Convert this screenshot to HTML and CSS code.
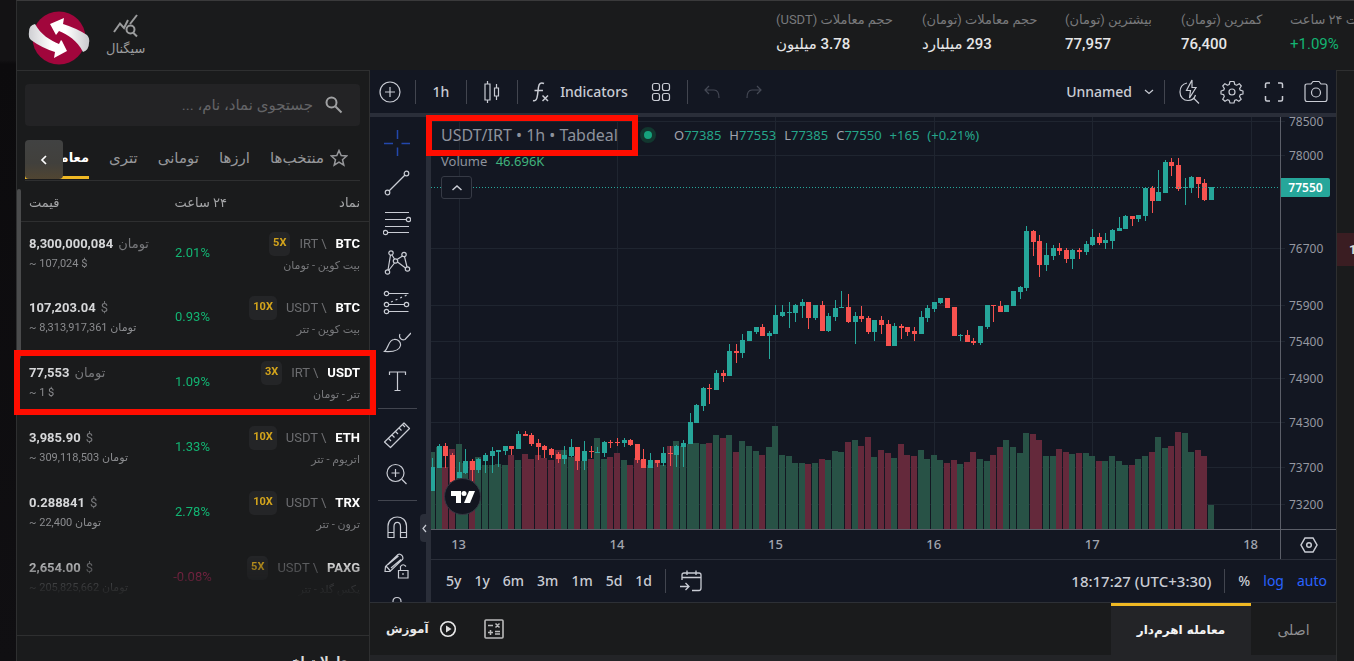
FILE: index.html
```html
<!DOCTYPE html>
<html lang="fa">
<head>
<meta charset="utf-8">
<title>Tabdeal</title>
<meta name="viewport" content="width=device-width, initial-scale=1">
<link rel="stylesheet" href="styles.css">
</head>
<body>
<div class="page">
  <div class="backdrop" aria-hidden="true"></div>
  <div class="app">
    <header class="header">
      <a class="logo" href="#" aria-label="Tabdeal">
        <svg width="62" height="54" viewBox="0 0 62 54">
          <defs><linearGradient id="ribbon" x1="0" x2="1"><stop offset="0" stop-color="#cfcfd3"/><stop offset=".6" stop-color="#fff"/></linearGradient>
          <linearGradient id="ribbon2" x1="1" x2="0"><stop offset="0" stop-color="#c9c9cd"/><stop offset=".6" stop-color="#fff"/></linearGradient></defs>
          <circle cx="31" cy="27" r="26.5" fill="#a1063c"/>
          <path d="M7 13Q1 14 1 21Q0 26 3 29Q14 37 27 41L26 47L39 40L34 30L33 29L31 33C22 29 13 24 7 13Z" fill="url(#ribbon)"/>
          <path d="M55 41Q61 39 61 32Q62 27 59 24Q48 17 35 13L36 7L22 13L28 24L31 20C40 24 49 29 55 41Z" fill="url(#ribbon2)"/>
        </svg>
      </a>
      <a class="signal" href="#">
        <svg width="26" height="24" viewBox="0 0 26 24" fill="none" stroke="currentColor" stroke-width="2"><path d="M1 18L7 9.500L11 14L15 6"/><path d="M17 10L24 1"/><circle cx="17.500" cy="15.500" r="4"/><path d="M20 18.500L24 22.500"/></svg>
        <span>سیگنال</span>
      </a>
      <dl class="stats">
        <div><dt>حجم معاملات (USDT)</dt><dd>3.78 میلیون</dd></div>
        <div><dt>حجم معاملات (تومان)</dt><dd>293 میلیارد</dd></div>
        <div><dt>بیشترین (تومان)</dt><dd>77,957</dd></div>
        <div><dt>کمترین (تومان)</dt><dd>76,400</dd></div>
        <div class="day"><dt>تغییرات ۲۴ ساعت</dt><dd class="up" dir="ltr">+1.09%</dd></div>
      </dl>
    </header>
    <div class="content">
      <aside class="sidebar">
        <label class="search">
          <svg width="18" height="18" viewBox="0 0 18 18" fill="none" stroke="currentColor" stroke-width="2"><circle cx="6.500" cy="6.500" r="5"/><path d="M10.500 10.500L16.500 16.500"/></svg>
          <input type="text" aria-label="جستجو" placeholder="جستجوی نماد، نام، ...">
        </label>
        <div class="market-tabs">
          <button class="mtab"><svg width="18" height="18" viewBox="0 0 18 18" fill="none" stroke="currentColor" stroke-width="1.500"><path d="M9 1.500L11.200 6.600L16.700 7L12.500 10.700L13.800 16.200L9 13.200L4.200 16.200L5.500 10.700L1.300 7L6.800 6.600Z"/></svg>منتخب‌ها</button>
          <button class="mtab">ارزها</button>
          <button class="mtab">تومانی</button>
          <button class="mtab">تتری</button>
          <button class="mtab active">معامله اهرم‌دار</button>
          <button class="scroll-tabs" aria-label="بیشتر"><svg width="8" height="10" viewBox="0 0 8 10" fill="none" stroke="#fff" stroke-width="1.700"><path d="M6 1L2 5L6 9"/></svg></button>
        </div>
        <div class="market-list">
          <table class="markets">
            <thead><tr><th class="price">قیمت</th><th class="change" dir="rtl">۲۴ ساعت</th><th class="symbol">نماد</th></tr></thead>
            <tbody>
              <tr><td class="price"><p><b>8,300,000,084</b> <i>تومان</i></p><small>~ 107,024 $</small></td><td class="change">2.01%</td><td class="symbol"><p><span class="lev">5X</span><i>IRT \</i><b>BTC</b></p><small dir="rtl">بیت کوین - تومان</small></td></tr>
              <tr><td class="price"><p><b>107,203.04</b> <i>$</i></p><small>~ 8,313,917,361 <i>تومان</i></small></td><td class="change">0.93%</td><td class="symbol"><p><span class="lev">10X</span><i>USDT \</i><b>BTC</b></p><small dir="rtl">بیت کوین - تتر</small></td></tr>
              <tr><td class="price"><p><b>77,553</b> <i>تومان</i></p><small>~ 1 $</small></td><td class="change">1.09%</td><td class="symbol"><p><span class="lev">3X</span><i>IRT \</i><b>USDT</b></p><small dir="rtl">تتر - تومان</small></td></tr>
              <tr><td class="price"><p><b>3,985.90</b> <i>$</i></p><small>~ 309,118,503 <i>تومان</i></small></td><td class="change">1.33%</td><td class="symbol"><p><span class="lev">10X</span><i>USDT \</i><b>ETH</b></p><small dir="rtl">اتریوم - تتر</small></td></tr>
              <tr><td class="price"><p><b>0.288841</b> <i>$</i></p><small>~ 22,400 <i>تومان</i></small></td><td class="change">2.78%</td><td class="symbol"><p><span class="lev">10X</span><i>USDT \</i><b>TRX</b></p><small dir="rtl">ترون - تتر</small></td></tr>
              <tr><td class="price"><p><b>2,654.00</b> <i>$</i></p><small>~ 205,825,662 <i>تومان</i></small></td><td class="change down">-0.08%</td><td class="symbol"><p><span class="lev">5X</span><i>USDT \</i><b>PAXG</b></p><small dir="rtl">پکس گلد - تتر</small></td></tr>
            </tbody>
          </table>
        </div>
        <h2 class="recent">معاملات اخیر</h2>
        <div class="scroll-thumb"></div>
        <div class="mark mark-row"></div>
      </aside>
      <main class="workspace">
        <div class="toolbar">
          <button class="t-add" aria-label="Compare"><svg width="24" height="24" viewBox="0 0 24 24"><circle cx="12" cy="12" r="10"/><path d="M12 7V17M7 12H17"/></svg></button>
          <span class="vsep"></span>
          <button class="t-int">1h</button>
          <span class="vsep"></span>
          <button class="t-type" aria-label="Candles"><svg width="20" height="24" viewBox="0 0 20 24"><path d="M5.500 1V4M5.500 20V23M3 4H8V20H3ZM14.500 4V8M14.500 16V20M12.500 8H16.500V16H12.500Z"/></svg></button>
          <span class="vsep"></span>
          <button class="t-ind"><svg width="20" height="24" viewBox="0 0 20 24"><path stroke-width="1.500" d="M2 20.500C5 21.500 6 19 6.500 15L7.500 7C8 3.500 10 2 13 3.500M3.500 10.500H12M11.500 15.500L17 21M17 15.500L11.500 21"/></svg>Indicators</button>
          <button class="t-grid" aria-label="Templates"><svg width="20" height="20" viewBox="0 0 20 20"><rect x="1.500" y="1.500" width="7" height="7" rx="2"/><rect x="11.500" y="1.500" width="7" height="7" rx="2"/><rect x="1.500" y="11.500" width="7" height="7" rx="2"/><rect x="11.500" y="11.500" width="7" height="7" rx="2"/></svg></button>
          <span class="vsep"></span>
          <button class="t-hist" aria-label="Undo"><svg width="18" height="16" viewBox="0 0 18 16"><path d="M6 2L2 6L6 10M2 6H11C14.500 6 16 8 16 14"/></svg></button>
          <button class="t-hist" aria-label="Redo"><svg width="18" height="16" viewBox="0 0 18 16"><path d="M12 2L16 6L12 10M16 6H7C3.500 6 2 8 2 14"/></svg></button>
          <button class="t-save">Unnamed <svg width="10" height="6" viewBox="0 0 10 6"><path d="M1 1L5 4.500L9 1"/></svg></button>
          <span class="vsep wide"></span>
          <button class="t-icon" aria-label="Quick search"><svg width="24" height="28" viewBox="0 0 24 28"><path d="M9 5C4 6 2 10 2 14C2 19 5.500 22.500 10 22.500C13.500 22.500 16.500 20.500 17.500 17M16 20.500L21 25.500M14 2L8.500 12.500H12.500L11.500 20L18 9.500H14Z"/></svg></button>
          <button class="t-icon" aria-label="Settings"><svg width="26" height="26" viewBox="0 0 26 26"><circle cx="13" cy="13" r="3"/><path stroke-linejoin="round" d="M11 2.500H15L15.800 5.500L17.600 6.200L20.300 4.700L22.300 7L20.600 9.600L21.200 11.200L24 12V15L21.200 15.700L20.500 17.500L22.200 20.200L19.800 22.300L17.300 20.700L15.700 21.400L15 24H11L10.200 21.400L8.500 20.700L6 22.300L3.700 20.200L5.300 17.500L4.700 15.700L2 15V12L4.700 11.200L5.400 9.600L3.700 7L5.900 4.700L8.500 6.200L10.200 5.500Z"/></svg></button>
          <button class="t-icon" aria-label="Fullscreen"><svg width="20" height="24" viewBox="0 0 20 24"><path stroke-width="1.500" d="M1.500 8V4.500Q1.500 3 3 3H6M14 3H17Q18.500 3 18.500 4.500V8M18.500 16V19.500Q18.500 21 17 21H14M6 21H3Q1.500 21 1.500 19.500V16"/></svg></button>
          <button class="t-icon" aria-label="Snapshot"><svg width="26" height="26" viewBox="0 0 26 26"><path d="M8 5L10 2.500H16L18 5H22Q24 5 24 7V20Q24 22.500 22 22.500H4Q2 22.500 2 20V7Q2 5 4 5Z"/><circle cx="13" cy="13.500" r="4.500"/></svg></button>
        </div>
        <div class="chart-area">
          <div class="tools">
            <button class="cross" aria-label="Cross"><svg width="28" height="28" viewBox="0 0 28 28"><path stroke-width="1.500" d="M1 14.500H10M18.500 14.500H27M14.500 1V10M14.500 18.500V27"/></svg></button>
            <button aria-label="Trend line"><svg width="28" height="28" viewBox="0 0 28 28"><circle cx="23.500" cy="4.500" r="2.300"/><circle cx="4.500" cy="23.500" r="2.300"/><path d="M6 22L22 6"/></svg></button>
            <button aria-label="Fib"><svg width="28" height="28" viewBox="0 0 28 28"><path d="M2 3.500H26M2 10.500H23M2 17.500H26M5 23.500H26"/><circle cx="25.500" cy="10.500" r="2.200"/><circle cx="2.500" cy="23.500" r="2.200"/></svg></button>
            <button aria-label="Patterns"><svg width="28" height="28" viewBox="0 0 28 28"><circle cx="8" cy="4" r="2.200"/><circle cx="21" cy="5.500" r="2.200"/><circle cx="12.500" cy="12" r="2.200"/><circle cx="4.500" cy="23" r="2.200"/><circle cx="24.500" cy="20" r="2.200"/><path d="M7.500 6L5 21M9 6L11.500 10M14 10.500L19.500 7M21.500 7.700L24 18M11.500 14L6 21M14.500 13L22.500 19"/></svg></button>
            <button aria-label="Forecast"><svg width="28" height="28" viewBox="0 0 28 28"><circle cx="3.500" cy="4.500" r="2.200"/><circle cx="3.500" cy="15.500" r="2.200"/><circle cx="23.500" cy="15.500" r="2.200"/><circle cx="3.500" cy="22.500" r="2.200"/><path d="M6 4.500H25.500M6 15.500H21M6 22.500H25.500"/><path stroke-dasharray="2 3" d="M8 13L25 5.500"/></svg></button>
            <button aria-label="Brush"><svg width="28" height="28" viewBox="0 0 28 28"><path d="M1.500 22.500C6 19 5 11 11 10.500C15 10 18 13 17.500 16.500C16.500 22 9 23 1.500 22.500ZM17 5C15.500 8 18 12 22 10.500L28 4"/></svg></button>
            <button aria-label="Text"><svg width="28" height="28" viewBox="0 0 28 28"><path d="M6.500 6V3H22.500V6M14.500 3V21.500M11.500 21.500H17.500"/></svg></button>
            <span class="hsep"></span>
            <button aria-label="Measure"><svg width="28" height="28" viewBox="0 0 28 28"><path stroke-linejoin="round" d="M1.500 21L21 2L26.500 7.500L7.500 26.500ZM5.500 17.500L8 20M9 14L11.500 16.500M12.500 10.500L15 13M16 7L18.500 9.500M19.500 3.500L22 6"/></svg></button>
            <button aria-label="Zoom"><svg width="28" height="28" viewBox="0 0 28 28"><circle cx="12.500" cy="12" r="8.500"/><path d="M12.500 8V16M8.500 12H16.500M19 18.500L23.500 23"/></svg></button>
            <span class="hsep"></span>
            <button aria-label="Magnet"><svg width="28" height="28" viewBox="0 0 28 28"><path d="M5 24.500V13C5 1 23.500 1 23.500 13V24.500H17.500V13.500C17.500 8 11 8 11 13.500V24.500ZM5 19.500H11M17.500 19.500H23.500"/></svg></button>
            <button aria-label="Lock drawing"><svg width="28" height="28" viewBox="0 0 28 28"><path d="M2 18.500L2.500 13.500L15 1.500Q17 .500 19 2.500Q20.500 4.500 19.500 6.500L7 18.500ZM3 13L7.500 18M5 11.500L15.500 3M8 15L18 6.500M15.500 17.500H25V25H15.500ZM17.500 17V13.500Q20 10 23 13.500M20 20V22"/></svg></button>
            <button aria-label="Hide"><svg width="28" height="28" viewBox="0 0 28 28"><path d="M10 14V8.500Q10 4.500 14 4.500T18 8.500V14"/></svg></button>
          </div>
          <div class="divider"><button class="handle" aria-label="Collapse tools"><svg width="5" height="9" viewBox="0 0 5 9"><path d="M4 1L1 4.500L4 8"/></svg></button></div>
          <div class="chart">
            <div class="plot-row">
              <div class="plot">
                <svg id="plot"></svg>
                <div class="legend">
                  <div class="l-top"><h1>USDT/IRT • 1h • Tabdeal</h1><span class="dot"></span>
                    <p class="ohlc"><span>O<b>77385</b></span><span>H<b>77553</b></span><span>L<b>77385</b></span><span>C<b>77550</b></span><b>+165</b><b>(+0.21%)</b></p></div>
                  <p class="vol">Volume <b>46.696K</b></p>
                  <button class="fold" aria-label="Collapse"><svg width="12" height="8" viewBox="0 0 12 8"><path stroke-width="1.500" d="M1.500 6L6 2L10.500 6"/></svg></button>
                </div>
                <div class="tv"><svg width="24" height="14" viewBox="0 0 24 14" fill="#fff"><path d="M0 1H10V13H5V6H0Z"/><circle cx="13" cy="3.500" r="2.500"/><path d="M18 1H24L19 13H13Z"/></svg></div>
              </div>
              <div class="axis"><svg id="prices"></svg><span class="last">77550</span></div>
            </div>
            <div class="time-row"><svg id="times"></svg><button class="corner" aria-label="Axis settings"><svg width="18" height="16" viewBox="0 0 18 16"><path stroke-width="1.500" d="M5 1H13L17 8L13 15H5L1 8Z"/><circle cx="9" cy="8" r="2.300" stroke-width="1.500"/></svg></button></div>
            <div class="range-row">
              <button>5y</button><button>1y</button><button>6m</button><button>3m</button><button>1m</button><button>5d</button><button>1d</button>
              <span class="vsep"></span>
              <button class="goto" aria-label="Go to"><svg width="24" height="22" viewBox="0 0 24 22"><path stroke-width="1.300" d="M3 10V5Q3 3 5 3H20Q22 3 22 5V18Q22 20.500 20 20.500H13M3 7.500H22M8 .500V5M17 .500V5M1 16.500H9.500M6.500 13L10 16.500L6.500 20"/></svg></button>
              <button class="clock">18:17:27 (UTC+3:30)</button>
              <span class="vsep"></span>
              <button class="pct">%</button><button class="on">log</button><button class="on">auto</button>
            </div>
          </div>
        </div>
        <nav class="dock">
          <a class="learn" href="#"><span>آموزش</span><svg width="18" height="18" viewBox="0 0 18 18"><circle cx="9" cy="9" r="7.300" stroke-width="1.600"/><path d="M7 5.500L12.500 9L7 12.500Z" fill="#ddd" stroke="none"/></svg></a>
          <button class="calc" aria-label="ماشین حساب"><svg width="20" height="20" viewBox="0 0 20 20"><rect x="1" y="1" width="18" height="18" rx="1" stroke-width="1.600"/><path stroke-width="1.500" d="M4 6.500H9M11.500 4.500L15.500 8.500M15.500 4.500L11.500 8.500M4 13.500H9M6.500 11V16M11 12.500H16M11 15H16"/></svg></button>
          <button class="dtab active">معامله اهرم‌دار</button>
          <button class="dtab">اصلی</button>
        </nav>
        <div class="mark mark-title"></div>
      </main>
      <aside class="rail"><span>1</span></aside>
    </div>
  </div>
</div>
<script src="chart.js"></script>
</body>
</html>
```
FILE: styles.css
```css
* { box-sizing: border-box; }
body { margin: 0; background: #111012; color: #a5a6a8; font: 13px/20px Roboto, "DejaVu Sans", sans-serif; overflow: hidden; }
button { margin: 0; padding: 0; border: 0; background: none; color: inherit; font: inherit; flex: none; display: flex; align-items: center; justify-content: center; }
a { color: inherit; text-decoration: none; }
p, dl, dt, dd, h1, h2 { margin: 0; font-weight: 400; }
i { font-style: normal; }
svg { flex: none; display: block; }
.page { display: grid; grid-template-columns: 16px minmax(0, 1fr); height: 100vh; }
.backdrop { background: linear-gradient(#131214 60px, #0c0b0d 64px, #100f12); }
.app { display: flex; flex-direction: column; min-width: 0; min-height: 0; background: #1a1b1c; }

.header { display: flex; flex: none; height: 70px; border-top: 1px solid #3a3a3b; border-left: 1px solid #2e2f30; overflow: hidden; }
.logo { padding: 10px 0 0 11px; }
.signal { display: flex; flex-direction: column; align-items: center; gap: 1px; margin-left: 16px; padding-top: 13px; color: #9b9c9d; }
.stats { display: grid; grid-template-columns: 120px 117px 90px 83px 64px; gap: 26px; margin-left: auto; padding-top: 9px; white-space: nowrap; }
.stats div { direction: rtl; display: flex; flex-direction: column; align-items: flex-end; }
.stats .day { width: 120px; }
.stats dt { color: #78797b; }
.stats dd { margin-top: 4px; font-size: 15px; font-weight: 500; color: #e6e6e7; }
.stats dd.up { color: #13b472; font-weight: 400; }

.content { display: flex; flex: 1; min-height: 0; }
.sidebar { position: relative; display: flex; flex-direction: column; flex: none; width: 354px; border: 1px solid #2e2f30; border-bottom: 0; z-index: 2; }
.search { display: flex; flex: none; direction: rtl; align-items: center; gap: 12px; height: 42px; margin: 13px 9px 0 8px; padding: 0 17px; border-radius: 4px; background: #232325; color: #a0a1a3; }
.search input { flex: 1; min-width: 0; padding: 0; border: 0; outline: 0; background: none; color: #ccc; font: inherit; font-size: 15px; }
.search input::placeholder { color: #636467; opacity: 1; }
.market-tabs { position: relative; display: flex; flex: none; direction: rtl; gap: 20px; height: 41px; margin: 14px 9px 0 8px; padding: 0 12px; border-bottom: 1px solid #2e2f30; overflow: hidden; }
.mtab { gap: 6px; height: 39px; font-size: 15px; color: #96979a; white-space: nowrap; border-bottom: 3px solid transparent; }
.mtab.active { color: #fff; font-weight: 700; font-size: 13px; border-color: #f0b924; }
.scroll-tabs { position: absolute; left: 0; top: 0; width: 38px; height: 39px; border-radius: 4px; background: linear-gradient(#414242, #41403c 60%, #504532); }
.market-list { flex: none; height: 454px; overflow: hidden; -webkit-mask-image: linear-gradient(#000 375px, transparent 416px); mask-image: linear-gradient(#000 375px, transparent 416px); }
.markets { width: 100%; border-collapse: collapse; table-layout: fixed; }
.markets th { height: 40px; padding: 5px 0 0; border-bottom: 1px solid #2e2f30; font-size: 13px; font-weight: 400; }
.markets td { height: 65px; padding: 11px 0 0; vertical-align: top; }
.markets .price { width: 149px; padding-left: 12px; text-align: left; }
.markets .change { width: 62px; text-align: center; white-space: nowrap; }
.markets th.change { text-align: right; padding-right: 1px; }
.markets .symbol { padding-right: 9px; text-align: right; }
.markets td.change { padding-top: 21px; padding-right: 9px; color: #12b573; }
.markets td.change.down { color: #b5285a; }
.markets p { display: flex; gap: 5px; height: 22px; align-items: center; white-space: nowrap; }
.markets p b { color: #d6d7d9; font-weight: 700; }
.markets p i { color: #77787b; }
.markets small { display: block; font-size: 11px; line-height: 18px; color: #8b8c8f; white-space: nowrap; }
.markets .symbol p { justify-content: flex-end; gap: 9px; }
.markets .symbol p b { color: #fff; }
.markets .symbol p i { color: #6c6d70; }
.markets .symbol small { margin-top: 2px; color: #77787b; }
.lev { padding: 1px 4px 3px; border-radius: 5px; background: #242527; color: #d3a41c; font-size: 11px; font-weight: 700; }
.recent { flex: none; border-top: 1px solid #2e2f30; padding: 15px 14px 0; text-align: right; direction: rtl; font-size: 12px; font-weight: 700; color: #dadada; }
.scroll-thumb { position: absolute; left: 0; top: 118px; width: 4px; height: 170px; background: #4a4b4c; border-radius: 2px; }
.mark { position: absolute; border: 6px solid #ff0d00; pointer-events: none; }
.mark-row { left: -3px; right: -7px; top: 279px; height: 65px; }
.mark-title { left: 56px; top: 45px; width: 212px; height: 41px; }

.workspace { position: relative; display: flex; flex-direction: column; flex: 1; min-width: 0; background: #131722; color: #c9ccd4; font-family: "Noto Sans", "DejaVu Sans", sans-serif; }
.workspace svg { stroke: currentColor; fill: none; stroke-width: 1.2; }
.toolbar { display: flex; flex: none; align-items: center; height: 47px; padding-left: 1px; border-bottom: 4px solid #2a2e39; font-size: 14px; font-weight: 500; }
.vsep { flex: none; width: 1px; height: 24px; background: #42454f; }
.vsep.wide { margin-right: 3px; }
.t-add { width: 38px; margin-right: 6px; }
.t-int { width: 50px; }
.t-type { width: 50px; }
.t-ind { width: 123px; gap: 9px; }
.t-grid { width: 40px; margin-right: 6px; }
.t-hist { width: 42px; margin-right: 0; color: #454955; }
.vsep + .t-hist { margin-left: 3px; }
.t-save { margin-left: auto; margin-right: 10px; gap: 12px; }
.t-icon { width: 40px; margin-left: 2px; }
.chart-area { display: flex; flex: 1; min-height: 0; border-bottom: 1px solid #2d3036; }
.tools { display: flex; flex-direction: column; align-items: center; width: 56px; padding: 6px 2px 0 0; overflow: hidden; flex: none; }
.tools button { width: 40px; height: 40px; }
.tools .cross { color: #2347ad; }
.hsep { flex: none; width: 39px; height: 1px; margin: 5px 0 6px; background: #42454f; }
.divider { position: relative; flex: none; width: 5px; background: #2a2e39; }
.handle { position: absolute; left: -6px; top: 397px; width: 9px; height: 28px; border-radius: 4px 0 0 4px; background: #2a2e39; }
.chart { display: flex; flex-direction: column; flex: 1; min-width: 0; }
.plot-row { display: flex; flex: 1; min-height: 0; border-bottom: 1px solid #5b5e68; }
.plot { position: relative; flex: 1; min-width: 0; overflow: hidden; }
#plot, #prices { width: 100%; height: 100%; shape-rendering: crispEdges; stroke: none; }
#times { flex: 1; min-width: 0; height: 29px; stroke: none; }
.legend { position: absolute; left: 10px; top: 6px; }
.l-top { display: flex; align-items: center; height: 24px; }
.legend h1 { width: 180px; font-size: 16px; white-space: nowrap; color: #8e929c; }
.dot { width: 16px; height: 16px; margin-left: 19px; border: 4px solid #12372f; border-radius: 50%; background: #16a27c; }
.ohlc { display: flex; gap: 8px; margin-left: 18px; font-size: 13px; white-space: nowrap; color: #a0a3ad; }
.legend b { font-weight: 400; color: #25a58a; }
.vol { height: 28px; line-height: 28px; font-size: 13px; color: #8e929c; }
.vol b { margin-left: 5px; color: #41b27d; }
.fold { width: 31px; height: 23px; margin-top: 1px; border: 1px solid #363a45; border-radius: 3px; background: #131722; }
.tv { position: absolute; left: 13px; bottom: 14px; display: flex; align-items: center; justify-content: center; width: 37px; height: 37px; border: 1px solid #343843; border-radius: 50%; background: #131520; }
.workspace .tv svg { fill: #fff; stroke: none; }
.axis { position: relative; flex: none; width: 56px; border-left: 1px solid #5b5e68; }
.last { position: absolute; left: 0; top: 61px; width: 49px; height: 19px; border-radius: 0 2px 2px 0; background: #26a69a; color: #fff; font-size: 12px; font-weight: 600; line-height: 19px; text-align: center; }
.time-row { display: flex; flex: none; height: 30px; border-bottom: 1px solid #2a2e39; }
.corner { width: 56px; border-left: 1px solid #5b5e68; }
.axis-label { fill: #9598a1; font-size: 12px; stroke: none; }
.day-label { fill: #a2a5af; font-size: 13px; font-weight: 500; text-anchor: middle; }
.range-row { display: flex; flex: none; align-items: center; height: 42px; padding: 0 9px 0 15px; gap: 13px; font-size: 14px; font-weight: 500; }
.range-row .clock { margin-left: auto; font-size: 15px; }
.range-row .on { color: #2962ff; font-weight: 400; }
.dock { display: flex; flex: none; height: 58px; align-items: stretch; border-bottom: 6px solid #232427; background: #1a1b1c; padding-left: 16px; color: #bbb; font-family: "DejaVu Sans", sans-serif; font-size: 12px; }
.learn { display: flex; align-items: center; gap: 10px; font-weight: 700; color: #e9e9e9; }
.calc { margin: 0 auto 0 27px; }
.dtab { width: 85px; padding-bottom: 1px; border-top: 3px solid transparent; color: #8e8f91; font-size: 14px; }
.dtab.active { width: 140px; border-color: #f0b924; background: #232427; color: #f4f4f4; font-weight: 700; font-size: 12px; }
.rail { flex: none; width: 18px; border: 1px solid #2e2f30; border-width: 1px 0 0 1px; padding-top: 162px; overflow: hidden; }
.rail span { display: block; padding-left: 12px; line-height: 33px; background: #3a1d22; color: #ddd; font-weight: 700; }
```
FILE: chart.js
```js
// One entry per hour: direction, body top, body bottom, high, low, volume top, in thirds of a pixel below each section's base.
const OFFSET = 117;
const sections = [
  { base: 370, volBase: 370, rows: `g 291 362 265 362 246;g 228 293 222 293 230;r 228 258 219 293 290;r 255 335 248 340 238;g 306 325 276 330 222;g 273 308 238 312 280;r 273 300 267 332 272;g 267 300 264 310 261;g 255 272 250 310 285;g 243 258 231 310 285;g 240 245 240 290 282;g 228 242 228 254 285;r 228 237 228 255 255;g 192 237 183 237 270;r 191 197 183 197 252;r 195 222 188 228 267;r 219 231 207 270 256;r 228 240 225 265 264;r 238 255 233 263 270;r 252 267 245 278 240;g 255 267 228 282 240;g 231 259 207 262 262;r 231 273 231 300 258;g 243 273 213 300 273;r 243 247 228 263 267;g 246 249 231 249 204;g 216 249 213 262 266;r 216 219 209 234 261;r 216 219 204 228 250;g 210 219 204 230 270;r 210 225 207 228 285;r 222 270 222 280 264;r 267 293 237 293 270;g 270 293 250 293 285;r 270 279 270 291 270;g 249 279 231 288 285;r 248 251 228 288 228;g 228 255 226 290 213;g 219 231 210 290 228;g 156 222 129 222 222;g 105 159 102 159 219;g 54 108 51 122 222;r 54 57 42 102 219;g 9 60 0 60 195;r 9 18 0 36 204` },
  { base: 280, volBase: 280, rows: `g 213 288 192 288 465;r 213 218 192 248 516;g 180 219 162 234 484;g 153 183 153 183 498;g 141 155 141 162 513;r 141 168 132 168 525;g 158 167 153 237 501;g 105 162 74 162 438;g 96 108 75 111 525;g 96 99 66 144 528;g 75 98 72 126 549;g 66 78 57 114 549;r 66 114 66 147 552;g 75 114 75 120 549;r 75 153 63 153 537;g 108 153 99 156 540;g 84 111 60 123 513;g 81 84 33 84 516;r 81 126 42 129 486;g 108 126 96 192 480;r 108 117 78 126 498;r 114 156 108 162 471;g 120 156 120 183 531;r 120 135 108 162 510;r 132 198 120 198 519;g 138 198 129 198 534;r 138 144 132 177 492;r 141 156 141 168 525;r 153 162 141 183 528;g 111 162 93 162 510;g 84 114 75 126 537;g 66 87 66 96 525;g 54 69 54 72 540;r 54 84 54 84 549;r 81 168 81 168 540;g 165 168 162 183 552;r 165 186 150 186 546;r 183 189 174 195 516;g 138 189 138 195 537;g 75 141 75 147 543;r 75 78 75 126 525;r 78 96 63 96 501;g 75 96 75 96 480;g 33 78 33 78 501;g 21 36 18 57 519` },
  { base: 100, volBase: 400, rows: `g 393 564 378 573 99;r 393 426 390 468 102;r 423 495 405 531 120;g 465 495 429 513 168;g 444 468 435 480 168;r 444 453 429 465 147;r 450 477 444 489 156;g 450 477 447 507 162;r 450 456 444 477 159;g 432 456 423 465 159;g 411 435 387 438 168;r 411 429 399 435 183;g 420 429 399 447 183;g 390 423 387 447 168;g 384 393 351 393 183;g 348 387 345 387 195;r 348 357 348 378 195;g 345 357 345 366 177;g 264 348 261 363 168;r 264 303 258 339 156;g 276 303 210 303 111;g 186 279 180 279 144;r 186 198 174 228 138;r 195 267 174 273 96;g 262 265 234 315 99;g 231 264 228 279 156;r 231 252 231 294 150;r 249 300 237 303 168;g 262 300 262 300 315` },
];
const bars = sections.flatMap(s => s.rows.split(';').map(row => {
  const [dir, ...n] = row.split(' ');
  const y = v => s.base + v / 3 - OFFSET;
  return { dir, top: y(+n[0]), bottom: y(+n[1]), high: y(+n[2]), low: y(+n[3]), vol: s.volBase + n[4] / 3 - OFFSET };
}));
const priceTicks = [[78500, 4], [78000, 38], [76700, 131], [75900, 188], [75400, 224], [74900, 261], [74300, 305], [73700, 350], [73200, 387]];
const pitch = 6.6, firstDay = 27.6, plotWidth = 849;

const rect = (x, y, w, h, fill) => `<rect x="${x}" y="${y}" width="${w}" height="${h}" fill="${fill}"/>`;

function draw() {
  const plot = document.getElementById('plot');
  const width = plot.clientWidth, height = plot.clientHeight;
  const shift = width - plotWidth;
  let out = '';
  priceTicks.forEach(([, y]) => { out += rect(0, y, width, 1, '#1f2530'); });
  for (let d = 0; d < 6; d++) out += rect(Math.round(shift + firstDay + d * pitch * 24), 0, 1, height, '#1f2530');
  bars.forEach((b, i) => {
    const x = Math.round(shift + firstDay + (i - 4) * pitch);
    const up = b.dir === 'g';
    out += rect(x - 3, Math.round(b.vol), 6, height - Math.round(b.vol), up ? '#285246' : '#64293b');
  });
  bars.forEach((b, i) => {
    const x = Math.round(shift + firstDay + (i - 4) * pitch);
    const fill = b.dir === 'g' ? '#26a69a' : '#f7524f';
    out += rect(x, Math.round(b.high), 1, Math.max(1, Math.round(b.low) - Math.round(b.high)), fill);
    out += rect(x - 2, Math.round(b.top), 5, Math.max(1, Math.round(b.bottom) - Math.round(b.top)), fill);
  });
  out += `<path d="M0 70.5H${width}" style="stroke:#26a69a" stroke-width="1" stroke-dasharray="1 2"/>`;
  plot.innerHTML = out;
  document.getElementById('prices').innerHTML = priceTicks.map(([p, y]) =>
    rect(0, y, 4, 1, '#1f2530') + `<text class="axis-label" x="8" y="${y + 5}">${p}</text>`).join('');
  document.getElementById('times').innerHTML = [13, 14, 15, 16, 17, 18].map((day, d) =>
    `<text class="day-label" x="${shift + firstDay + d * pitch * 24}" y="19">${day}</text>`).join('');
}
draw();
addEventListener('resize', draw);
```
